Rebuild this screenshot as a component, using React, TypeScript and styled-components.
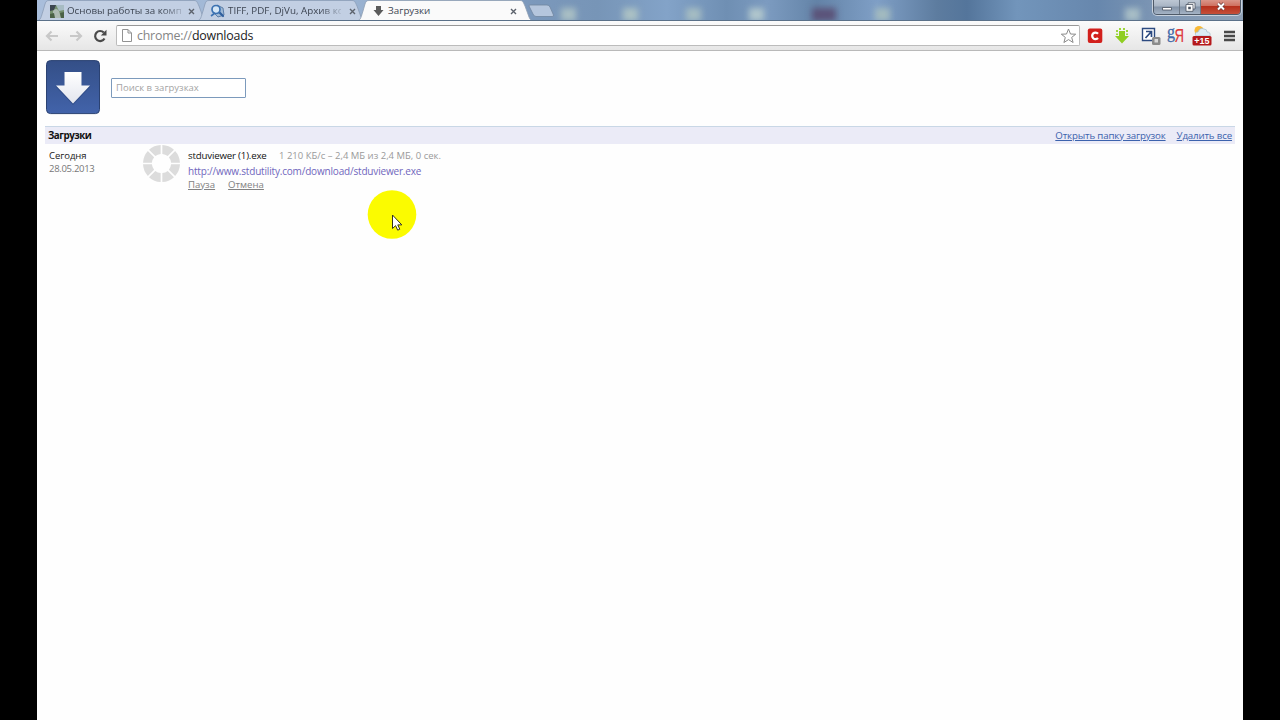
import React from "react";
import styled, { createGlobalStyle } from "styled-components";

const Global = createGlobalStyle`
  * { box-sizing: border-box; }
  body { margin: 0; background: #000; overflow: hidden; font-family: "Open Sans", "Noto Sans", sans-serif; }
`;

const Screen = styled.div`
  width: 1280px; height: 720px; padding: 0 37px; background: #000;
`;
const Window = styled.div`
  height: 720px; background: #fefefe; display: flex; flex-direction: column; overflow: hidden;
`;
const TabStrip = styled.div`
  position: relative; height: 21px; display: flex; flex: none; overflow: hidden;
  border-bottom: 1px solid #5b7189;
  background: linear-gradient(90deg, #a9bedb 0, #9db5d3 300px, #7b98bb 500px, #7795b7 560px, #83a3c8 630px, #6f8fb3 690px, #7c9bc0 730px, #6484a8 780px, #7f9fc6 840px, #5d7c9f 900px, #54759b 930px, #7295bb 980px, #6787ad 1060px, #7d96b4 1120px, #8fa1b6 100%);
`;
const Glow = styled.span<{ $x: number; $c: string; $w?: number }>`
  position: absolute; left: ${(p) => p.$x}px; top: 8px; width: ${(p) => p.$w ?? 15}px; height: 13px;
  background: ${(p) => p.$c}; filter: blur(3px);
`;
const Tab = styled.div<{ $active?: boolean }>`
  position: relative; flex: none; width: ${(p) => (p.$active ? 169 : 160)}px; height: 21px;
  display: flex; align-items: center; padding: 1px 0 0 13px;
  z-index: ${(p) => (p.$active ? 2 : 1)};
`;
const TabShape = styled.svg`
  position: absolute; left: 0; top: 0; overflow: visible;
`;
const TabIcon = styled.svg`
  position: relative; flex: none; margin-right: 3px;
`;
const TabTitle = styled.span<{ $w: number; $fade?: boolean }>`
  position: relative; width: ${(p) => p.$w}px; white-space: nowrap;
  font-size: 9.8px; line-height: 14px; color: #3d4552;
  ${(p) => p.$fade && "mask-image: linear-gradient(90deg, #000 82%, rgba(0, 0, 0, 0.2) 100%);"}
`;
const TabClose = styled.svg<{ $gap: number }>`
  position: relative; flex: none; margin-left: ${(p) => p.$gap}px;
`;
const NewTab = styled.svg`
  position: relative; flex: none; margin: 4px 0 0 1px;
`;
const Controls = styled.div`
  position: relative; display: flex; margin: -2px 2px 0 auto; width: 88px; height: 17px;
  border: 1px solid #4f5a68; border-radius: 0 0 4px 4px; overflow: hidden;
  box-shadow: 0 0 0 1px #c8d2de;
`;
const Control = styled.div<{ $w: number; $close?: boolean }>`
  width: ${(p) => p.$w}px; display: flex; align-items: center; justify-content: center; flex: none;
  border-left: ${(p) => (p.$w === 25 ? 0 : 1)}px solid #6d7886;
  background: ${(p) =>
    p.$close
      ? "linear-gradient(#dc9c90 0, #cf7160 45%, #b6301c 50%, #c5503a 100%)"
      : "linear-gradient(#c0cad6 0, #a9b5c4 48%, #8393a7 52%, #a5b3c5 100%)"};
`;

const Toolbar = styled.div`
  height: 30px; flex: none; display: flex; align-items: center; padding: 0 7px 0 8px;
  background: linear-gradient(#fbfbfb, #e6e6e6); border-bottom: 1px solid #b9b9b9;
`;
const NavIcon = styled.svg`
  flex: none; margin-right: 10px;
`;
const Omnibox = styled.div`
  width: 964px; height: 21px; flex: none; display: flex; align-items: center; padding: 0 2px 0 5px;
  background: #fff; border: 1px solid #bcbcbc; border-top-color: #989898; border-radius: 2px; margin: 0 7px 0 -2px;
`;
const Address = styled.span`
  margin-left: 5px; flex: 1; font-size: 12.4px; letter-spacing: -0.21px; line-height: 18px; color: #1b1b1b; white-space: nowrap;
`;
const Scheme = styled.span`
  color: #858585;
`;
const Extensions = styled.div`
  display: flex; flex: 1; align-items: center;
`;
const Extension = styled.svg<{ $gap?: number }>`
  flex: none; margin-left: ${(p) => p.$gap ?? 0}px;
`;

const Page = styled.main`
  flex: 1; padding: 9px 8px 0; font-size: 10px; background: #fefefe;
`;
const Header = styled.header`
  display: flex; align-items: center; height: 56px;
`;
const Search = styled.input`
  width: 135px; height: 20px; margin-left: 10px; padding: 0 0 1px 4px; border: 1px solid #7c9abc; border-radius: 1px;
  background: #fff; outline: none; font-family: inherit; font-size: 9.5px; color: #333;
  &::placeholder { color: #a4a4a4; opacity: 1; }
`;
const Summary = styled.div`
  display: flex; align-items: center; height: 18px; margin-top: 10px; padding: 0 3px 0 3px;
  background: #ebebf7; border-top: 1px solid #c9d7e6;
`;
const Title = styled.h1`
  margin: 0; flex: 1; font-size: 9.8px; letter-spacing: -0.5px; line-height: 14px; font-weight: 700; color: #111;
`;
const SummaryLink = styled.a`
  margin-left: 11px; font-size: 9.7px; letter-spacing: -0.15px; line-height: 14px; color: #3c62ad; text-decoration: underline; white-space: nowrap;
`;
const Row = styled.div`
  display: flex; padding: 0 4px;
`;
const DateCol = styled.div`
  width: 93px; padding-top: 5px; font-size: 9.5px; letter-spacing: -0.3px; line-height: 13px; color: #777;
`;
const Day = styled.div`
  color: #222; letter-spacing: -0.05px;
`;
const Info = styled.div`
  padding: 5px 0 0 7px; line-height: 14px; white-space: nowrap;
`;
const FileLine = styled.div`
  display: flex; gap: 12px; height: 15px; font-size: 9.7px;
`;
const FileName = styled.span`
  color: #111; width: 79px; letter-spacing: -0.18px;
`;
const Status = styled.span`
  color: #9a9a9a; font-size: 9.5px;
`;
const Source = styled.a`
  display: block; height: 14px; font-size: 10px; letter-spacing: -0.18px; color: #7066bd;
`;
const Actions = styled.div`
  display: flex; gap: 13px; font-size: 9.6px;
`;
const Action = styled.a`
  color: #828282; text-decoration: underline;
`;
const Pointer = styled.svg`
  position: absolute; left: 367px; top: 190px;
`;

const SHAPE_W = [171, 169, 177];

function Shape({ i }: { i: number }) {
  const w = SHAPE_W[i];
  const active = i === 2;
  return (
    <TabShape width={w} height="21" viewBox={`0 0 ${w} 21`}>
      <path
        d={`M0 21 C4 20 4 17 6 11 L8 4 C9 1 10 .5 12 .5 H${w - 14} C${w - 11} .5 ${w - 11} 2 ${w - 9} 6 L${w - 5} 17 C${w - 4} 20 ${w - 2} 21 ${w} 21 Z`}
        fill={active ? "#fafafa" : "#c2cfe3"}
        stroke={active ? "#8e9eb2" : "#8b9db6"}
        strokeWidth=".8"
      />
      {active && <path d={`M5 20.5 H${w - 4}`} stroke="#fafafa" strokeWidth="2" />}
    </TabShape>
  );
}

function Cross({ gap }: { gap: number }) {
  return (
    <TabClose $gap={gap} width="7" height="7" viewBox="0 0 7 7">
      <path d="M1 1 L6 6 M6 1 L1 6" stroke="#5c626c" strokeWidth="1.4" />
    </TabClose>
  );
}

const segments = Array.from({ length: 8 }, (_, i) => i);

export default function App() {
  return (
    <Screen>
      <Global />
      <Window>
        <TabStrip>
          <Glow $x={524} $c="#a9bfc4" />
          <Glow $x={586} $c="#abc1c4" />
          <Glow $x={649} $c="#a5bcc2" />
          <Glow $x={712} $c="#b0c6cc" />
          <Glow $x={775} $w={24} $c="#5b5379" />
          <Glow $x={838} $c="#a3bbbf" />
          <Glow $x={1088} $c="#a8bec6" />
          <Tab>
            <Shape i={0} />
            <TabIcon width="14" height="13" viewBox="0 0 14 13">
              <path d="M0 0H14V13H0Z" fill="#75906f" />
              <path d="M0 0H6L4 5 0 6Z" fill="#3c4650" />
              <path d="M6 0H14V5L9 6Z" fill="#a7bcc3" />
              <path d="M3 6Q6 2 9 6L11 13H3Z" fill="#aebbb4" />
              <path d="M0 9 4 8 5 13H0Z M10 8 14 7V13H11Z" fill="#4b6247" />
            </TabIcon>
            <TabTitle $w={115} $fade>Основы работы за комп</TabTitle>
            <Cross gap={6} />
          </Tab>
          <Tab>
            <Shape i={1} />
            <TabIcon width="15" height="14" viewBox="0 0 15 14">
              <path d="M7 1 13 4 14 11 8 13 4 9Z" fill="#9fb9d6" stroke="#5c7ea8" />
              <path d="M9 8 13 12" stroke="#2f5f9e" strokeWidth="2.2" strokeLinecap="round" />
              <circle cx="6" cy="5.5" r="4" fill="#d4e6f6" stroke="#3b72b2" strokeWidth="1.7" />
              <path d="M1 12 5 9" stroke="#3b72b2" strokeWidth="1.6" />
            </TabIcon>
            <TabTitle $w={113} $fade>TIFF, PDF, DjVu, Архив ко</TabTitle>
            <Cross gap={8} />
          </Tab>
          <Tab $active>
            <Shape i={2} />
            <TabIcon width="15" height="12" viewBox="0 0 15 12">
              <path d="M6 1H11V5H13.5L8.500 11 3.500 5H6Z" fill="#5b5b5b" />
            </TabIcon>
            <TabTitle $w={113}>Загрузки</TabTitle>
            <Cross gap={9} />
          </Tab>
          <NewTab width="28" height="14" viewBox="0 0 28 14">
            <path d="M3 1H20Q22 1 23 3L26.500 11Q27 12.500 25 12.500H9Q7 12.500 6 10L2 2Q2 1 3 1Z" fill="#b5c6dd" stroke="#71869f" strokeWidth=".8" />
          </NewTab>
          <Controls>
            <Control $w={25}>
              <svg width="12" height="9" viewBox="0 0 12 9"><path d="M1.500 5.500H10.500V8H1.500Z" fill="#fff" stroke="#49525f" strokeWidth=".8" /></svg>
            </Control>
            <Control $w={21}>
              <svg width="11" height="10" viewBox="0 0 11 10">
                <path d="M3 .8H10V7H3Z" fill="#fff" stroke="#49525f" strokeWidth=".8" />
                <path d="M1 2.500H8V9.300H1Z" fill="#fff" stroke="#49525f" strokeWidth=".8" />
                <path d="M3.200 4.700H5.800V7.200H3.200Z" fill="#49525f" />
              </svg>
            </Control>
            <Control $w={40} $close>
              <svg width="10" height="9" viewBox="0 0 10 9">
                <path d="M2 1.500 8 7.500M8 1.500 2 7.500" stroke="#6b3a3a" strokeWidth="3.400" />
                <path d="M2 1.500 8 7.500M8 1.500 2 7.500" stroke="#fff" strokeWidth="2" />
              </svg>
            </Control>
          </Controls>
        </TabStrip>

        <Toolbar>
          <NavIcon width="14" height="12" viewBox="0 0 14 12">
            <path d="M13 6H2M6.500 1.500 2 6 6.500 10.500" fill="none" stroke="#c8c8c8" strokeWidth="2.200" />
          </NavIcon>
          <NavIcon width="14" height="12" viewBox="0 0 14 12">
            <path d="M1 6H12M7.500 1.500 12 6 7.500 10.500" fill="none" stroke="#c8c8c8" strokeWidth="2.200" />
          </NavIcon>
          <NavIcon width="15" height="14" viewBox="0 0 15 14">
            <path d="M11.500 9.500A5 5 0 1 1 10.800 3.600" fill="none" stroke="#4a4a4a" strokeWidth="2.200" />
            <path d="M13.500 .8V6.500H7.800Z" fill="#4a4a4a" />
          </NavIcon>
          <Omnibox>
            <svg width="10" height="13" viewBox="0 0 10 13">
              <path d="M.5 .5H6L9.500 4V12.500H.5ZM6 .5V4H9.500" fill="#fff" stroke="#929292" />
            </svg>
            <Address><Scheme>chrome://</Scheme>downloads</Address>
            <svg width="17" height="16" viewBox="0 0 16 16">
              <path d="M8 1 10 6 15.200 6.200 11.200 9.400 12.600 14.500 8 11.600 3.400 14.500 4.800 9.400 .8 6.200 6 6Z" fill="#fff" stroke="#8a8a8a" strokeWidth="1" strokeLinejoin="round" />
            </svg>
          </Omnibox>
          <Extensions>
            <Extension width="16" height="16" viewBox="0 0 16 16">
              <rect x=".8" y=".5" width="14.500" height="14.500" rx="2" fill="#d2201c" />
              <path d="M11 5.700A3.300 3.300 0 1 0 11 10" fill="none" stroke="#fff" strokeWidth="2.300" />
            </Extension>
            <Extension $gap={11} width="16" height="16" viewBox="0 0 16 16">
              <path d="M5 3H11V8H15L8 15.500 1 8H5Z" fill="#8fce22" />
              <path d="M5 0H7V2H5ZM9 0H11V2H9ZM2 2H4V4H2ZM12 2H14V4H12ZM2 5.500H4V7H2ZM12 5.500H14V7H12Z" fill="#9dd63c" />
            </Extension>
            <Extension $gap={11} width="20" height="18" viewBox="0 0 20 18">
              <path d="M1.500 1.500H13.500V13.500H1.500Z" fill="#fff" stroke="#2c4a80" strokeWidth="1.400" />
              <path d="M5 4.500H10.500V10M10 5 4.500 11" fill="none" stroke="#2c4a80" strokeWidth="1.700" />
              <rect x="11" y="10" width="8.500" height="8" rx="1.500" fill="#8b8b8b" />
              <rect x="13.500" y="12" width="3.500" height="3.500" fill="#d8d8d8" />
            </Extension>
            <Extension $gap={6} width="18" height="17" viewBox="0 0 18 17">
              <text x="0" y="10.500" fontFamily="Liberation Serif" fontSize="18" fill="#4069a8" stroke="#4069a8" strokeWidth=".3" textLength="8" lengthAdjust="spacingAndGlyphs">g</text>
              <text x="7.500" y="14.500" fontFamily="Liberation Sans" fontSize="18" fill="#dd3a3a" stroke="#dd3a3a" strokeWidth=".2" textLength="9.500" lengthAdjust="spacingAndGlyphs">Я</text>
            </Extension>
            <Extension $gap={7} width="20" height="21" viewBox="0 0 20 21">
              <circle cx="7" cy="5.500" r="4.500" fill="#f8b936" />
              <path d="M4 11Q2 7 6 7Q8 2 12 4Q15 4 15 7Q19 7 18 11Z" fill="#dcebf4" stroke="#a5bdcb" strokeWidth=".7" />
              <rect x=".5" y="11" width="19" height="9.500" rx="1.500" fill="#b5191c" />
              <text x="10" y="19" textAnchor="middle" fontFamily="Liberation Sans" fontWeight="700" fontSize="9" fill="#fff">+15</text>
            </Extension>
            <Extension $gap={11} width="13" height="12" viewBox="0 0 13 12">
              <path d="M1 2H12M1 6H12M1 10H12" stroke="#494949" strokeWidth="2.400" />
            </Extension>
          </Extensions>
        </Toolbar>

        <Page>
          <Header>
            <svg width="56" height="56" viewBox="0 0 56 56">
              <defs>
                <linearGradient id="tile" x1="0" y1="0" x2="0" y2="1">
                  <stop offset="0" stopColor="#344f87" /><stop offset="1" stopColor="#4263aa" />
                </linearGradient>
                <linearGradient id="arrow" x1="0" y1="0" x2="0" y2="1">
                  <stop offset="0" stopColor="#fff" /><stop offset="1" stopColor="#e3e6ee" />
                </linearGradient>
              </defs>
              <rect x="1.500" y=".6" width="53" height="53" rx="4" fill="url(#tile)" stroke="#2b4272" />
              <path d="M19.500 13H36.500V26.500H45.500L28 45 10.500 26.500H19.500Z" fill="#263f76" opacity=".5" />
              <path d="M19.500 12H36.500V25.500H45L28 43.500 11 25.500H19.500Z" fill="url(#arrow)" />
            </svg>
            <Search placeholder="Поиск в загрузках" />
          </Header>
          <Summary>
            <Title>Загрузки</Title>
            <SummaryLink>Открыть папку загрузок</SummaryLink>
            <SummaryLink>Удалить все</SummaryLink>
          </Summary>
          <Row>
            <DateCol>
              <Day>Сегодня</Day>
              28.05.2013
            </DateCol>
            <svg width="39" height="39" viewBox="-19.5 -19.5 39 39">
              {segments.map((i) => (
                <path key={i} d="M-6.300 -17.400A18.500 18.500 0 0 1 6.300 -17.400L2.900 -9.200A9.600 9.600 0 0 0 -2.900 -9.200Z" fill="#dcdcdc" transform={`rotate(${i * 45 + 22.5})`} />
              ))}
            </svg>
            <Info>
              <FileLine>
                <FileName>stduviewer (1).exe</FileName>
                <Status>1 210 КБ/с – 2,4 МБ из 2,4 МБ, 0 сек.</Status>
              </FileLine>
              <Source>http://www.stdutility.com/download/stduviewer.exe</Source>
              <Actions>
                <Action>Пауза</Action>
                <Action>Отмена</Action>
              </Actions>
            </Info>
          </Row>
        </Page>
      </Window>
      <Pointer width="50" height="50" viewBox="0 0 50 50">
        <circle cx="25" cy="24.500" r="24.300" fill="#fbfb00" />
        <path d="M25.500 25V38.500L28.600 35.700 30.700 40.200 32.800 39.200 30.800 34.900H34.800Z" fill="#fff" stroke="#33331a" strokeWidth="1" />
      </Pointer>
    </Screen>
  );
}
